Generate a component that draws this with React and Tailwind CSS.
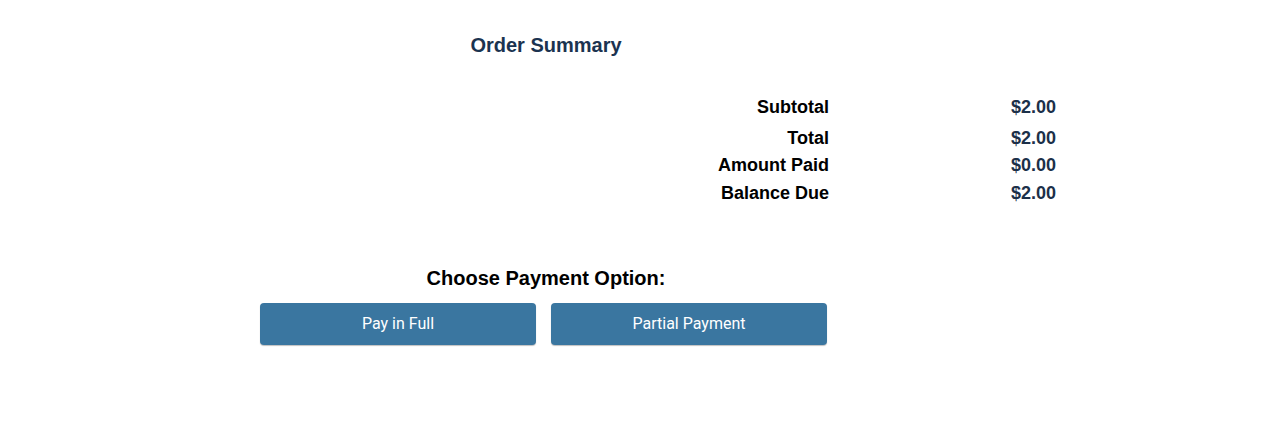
const rows = [
  { label: "Subtotal", value: "$2.00", h: "h-[36px]" },
  { label: "Total", value: "$2.00", h: "h-[26px]" },
  { label: "Amount Paid", value: "$0.00", h: "h-[28px]" },
  { label: "Balance Due", value: "$2.00", h: "h-[28px]" },
];

export default function App() {
  return (
    <div className="min-h-[424px] w-full bg-white pt-[31px] font-['Liberation_Sans',Arial,sans-serif]">
      {/* heading */}
      <div className="ml-[260px] w-[572px] text-center">
        <h2 className="text-[20px] leading-[28px] font-bold text-[#1b3350]">
          Order Summary
        </h2>
      </div>

      {/* totals */}
      <div className="mt-[30px] w-[1056px]">
        {rows.map((r) => (
          <div key={r.label} className={`flex items-center justify-end ${r.h}`}>
            <span className="text-[18px] font-bold text-black">{r.label}</span>
            <span className="w-[227px] text-right text-[18px] font-bold text-[#1c3049]">
              {r.value}
            </span>
          </div>
        ))}
      </div>

      {/* payment options */}
      <div className="mt-[57px] ml-[260px] w-[572px]">
        <h3 className="text-center text-[20px] leading-[28px] font-bold text-black">
          Choose Payment Option:
        </h3>
        <div className="mt-[11px] flex gap-[15px]">
          <button className="h-[42px] w-[276px] rounded-[4px] bg-[#3a76a0] text-[16px] text-white shadow-[0_1px_1px_rgba(0,0,0,0.25)] font-['Roboto',sans-serif]">
            Pay in Full
          </button>
          <button className="h-[42px] w-[276px] rounded-[4px] bg-[#3a76a0] text-[16px] text-white shadow-[0_1px_1px_rgba(0,0,0,0.25)] font-['Roboto',sans-serif]">
            Partial Payment
          </button>
        </div>
      </div>
    </div>
  );
}
